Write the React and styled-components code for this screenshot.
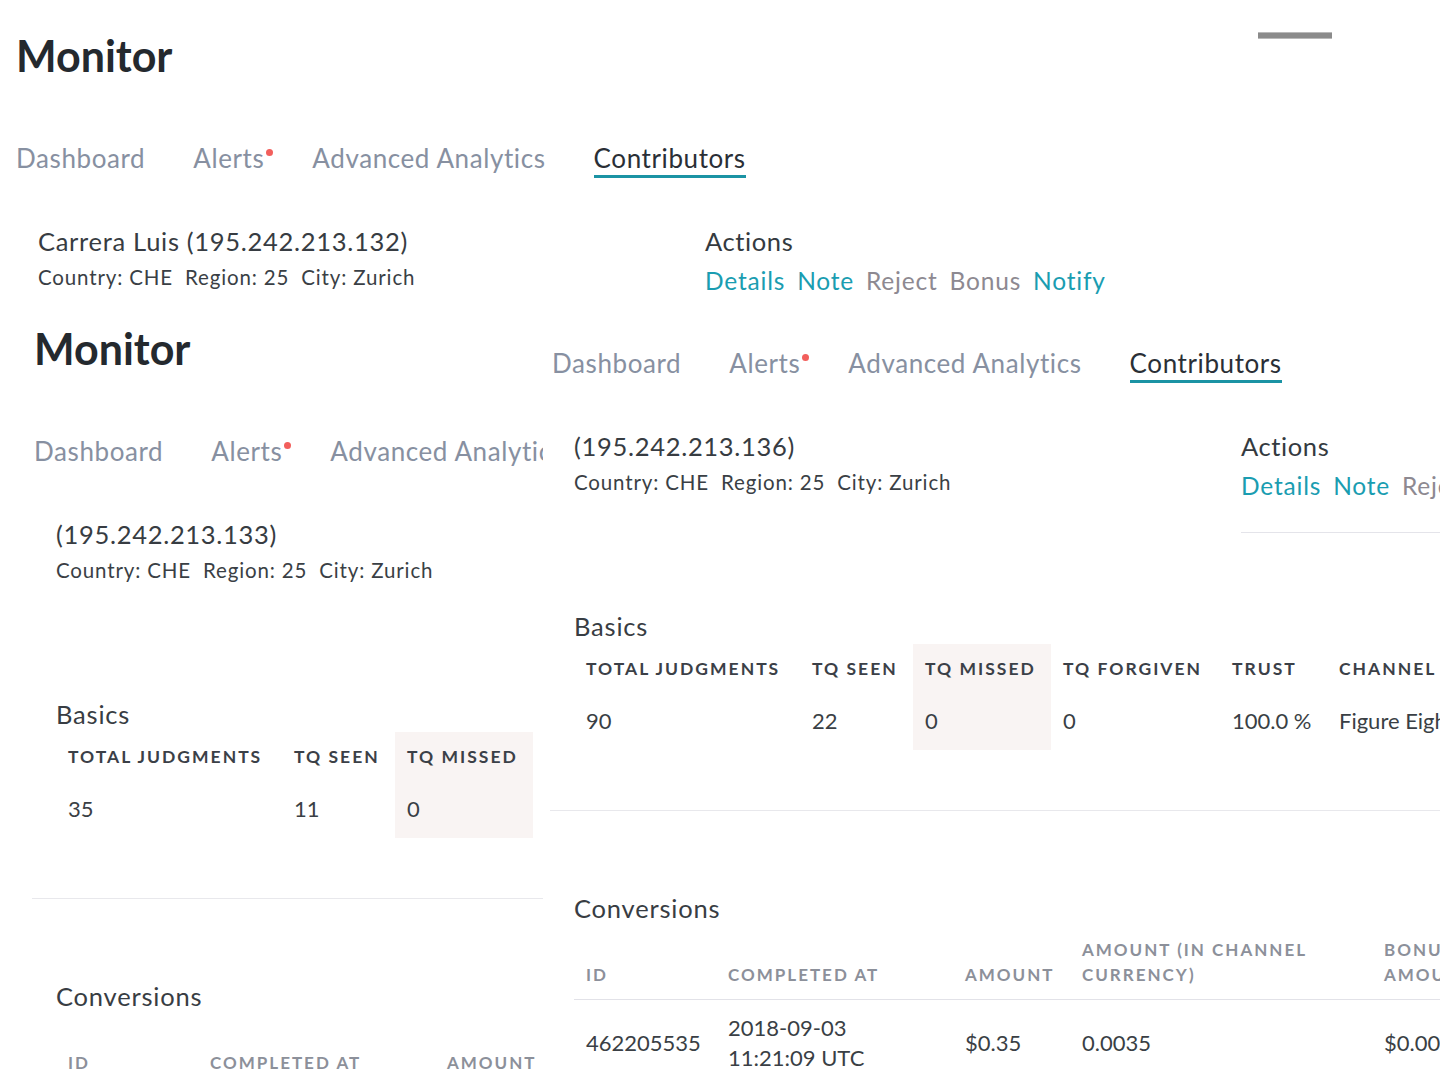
import React from 'react';
import styled, { createGlobalStyle } from 'styled-components';

const GlobalStyle = createGlobalStyle`
  html, body { margin: 0; padding: 0; background: #ffffff; }
  body {
    font-family: Lato, "Open Sans", "Liberation Sans", sans-serif;
    color: #3a3f45;
  }
  * { box-sizing: border-box; }
`;

const Screen = styled.div`
  width: 1440px;
  height: 1080px;
  overflow: hidden;
  display: flex;
  flex-direction: column;
  background: #fff;
`;

const TopPane = styled.div`
  height: 320px;
  flex-shrink: 0;
  overflow: hidden;
`;

const SplitPane = styled.div`
  flex: 1;
  min-height: 0;
  display: grid;
  grid-template-columns: 543px 1fr;
  overflow: hidden;
`;

const Column = styled.div`
  min-width: 0;
  overflow: hidden;
  background: #fff;
`;

const Frame = styled.div`
  width: 1440px;
  padding: ${(p) => p.$top}px 0 0 ${(p) => p.$left}px;
`;

const TitleRow = styled.header`
  display: flex;
  justify-content: space-between;
  align-items: flex-start;
  margin-bottom: 61px;
`;

const Title = styled.h1`
  margin: 0;
  font-size: 43px;
  line-height: 52px;
  font-weight: 700;
  color: #24292e;
`;

const MenuBar = styled.div`
  width: 74px;
  height: 7px;
  margin: 2px 108px 0 0;
  background: #8b8b8b;
  border-top: 1px solid #b9b9b9;
  border-bottom: 1px solid #b9b9b9;
`;

const TabList = styled.nav`
  display: flex;
  gap: 48px;
`;

const Tab = styled.span`
  position: relative;
  font-size: 26px;
  line-height: 1.2;
  letter-spacing: 0.6px;
  padding-bottom: 1px;
  border-bottom: 3px solid ${(p) => (p.$active ? '#1b93a4' : 'transparent')};
  color: ${(p) => (p.$active ? '#2a2f36' : '#8790a1')};
  white-space: nowrap;
`;

const Dot = styled.span`
  position: absolute;
  top: 6px;
  right: -9px;
  width: 7px;
  height: 7px;
  border-radius: 50%;
  background: #f25f5c;
`;

const Head = styled.div`
  display: flex;
  align-items: flex-start;
  margin-top: 48px;
`;

const Info = styled.div`
  width: 689px;
  flex-shrink: 0;
  padding-left: 22px;
`;

const Name = styled.div`
  font-size: 25.5px;
  line-height: 30px;
  letter-spacing: 0.7px;
  color: #373c42;
  white-space: nowrap;
`;

const Meta = styled.div`
  display: flex;
  gap: 12px;
  margin-top: 9px;
  font-size: 20.5px;
  line-height: 24px;
  letter-spacing: 0.85px;
  color: #3a3f45;
  white-space: nowrap;
`;

const Actions = styled.div`
  flex: 1;
  padding-bottom: 32px;
  border-bottom: 1px solid #e4e4ea;
`;

const ActionsTitle = styled.div`
  font-size: 25.5px;
  line-height: 30px;
  letter-spacing: 0.6px;
  color: #343a40;
`;

const LinkRow = styled.div`
  display: flex;
  gap: 12px;
  margin-top: 10px;
  font-size: 24.5px;
  line-height: 29px;
  letter-spacing: 0.8px;
  white-space: nowrap;
`;

const ActionLink = styled.span`
  color: ${(p) => (p.$muted ? '#8d8991' : '#1a9db1')};
`;

const Section = styled.section`
  margin-top: ${(p) => p.$gap}px;
  padding-left: 22px;
`;

const SectionTitle = styled.h2`
  margin: 0;
  font-size: 25.5px;
  line-height: 30px;
  font-weight: 400;
  letter-spacing: 0.8px;
  color: #383d43;
`;

const Table = styled.table`
  margin-top: ${(p) => p.$gap}px;
  border-collapse: collapse;
  table-layout: fixed;
  text-align: left;
`;

const StatHead = styled.th`
  padding: 14px 12px;
  font-size: 17.5px;
  line-height: 21px;
  font-weight: 700;
  letter-spacing: 2px;
  text-transform: uppercase;
  color: #3b4047;
  white-space: nowrap;
  background: ${(p) => (p.$hl ? '#f9f4f3' : 'transparent')};
`;

const StatCell = styled.td`
  padding: 15px 12px 15px;
  font-size: 22px;
  line-height: 26.4px;
  color: #3a3f45;
  white-space: nowrap;
  background: ${(p) => (p.$hl ? '#f9f4f3' : 'transparent')};
`;

const Divider = styled.hr`
  margin: 60px 0 0 -2px;
  border: 0;
  height: 1px;
  background: #e8e8ec;
`;

const ConvHead = styled.th`
  padding: 10px 12px 12px;
  font-size: 17px;
  line-height: 25px;
  font-weight: 700;
  letter-spacing: 2px;
  text-transform: uppercase;
  color: #8c909a;
  vertical-align: bottom;
  border-bottom: 1px solid #e2e2e8;
`;

const ConvCell = styled.td`
  padding: 13px 12px;
  font-size: 22px;
  line-height: 30px;
  color: #3a3f45;
  vertical-align: middle;
`;

const statCols = [226, 113, 138, 169, 107, 220];
const statLabels = ['Total judgments', 'TQ seen', 'TQ missed', 'TQ forgiven', 'Trust', 'Channel'];
const convCols = [142, 237, 117, 302, 140];
const convLabels = ['ID', 'Completed at', 'Amount', 'Amount (in channel currency)', 'Bonus amount'];

const tabs = ['Dashboard', 'Alerts', 'Advanced Analytics', 'Contributors'];
const actions = [
  { label: 'Details' },
  { label: 'Note' },
  { label: 'Reject', muted: true },
  { label: 'Bonus', muted: true },
  { label: 'Notify' },
];

function MonitorPage({ left, top, showTitle, name, ip, stats, conversion }) {
  return (
    <Frame $left={left} $top={top}>
      {showTitle && (
        <TitleRow>
          <Title>Monitor</Title>
          <MenuBar />
        </TitleRow>
      )}
      <TabList>
        {tabs.map((t) => (
          <Tab key={t} $active={t === 'Contributors'}>
            {t}
            {t === 'Alerts' && <Dot />}
          </Tab>
        ))}
      </TabList>
      <Head>
        <Info>
          <Name>{name ? `${name} (${ip})` : `(${ip})`}</Name>
          <Meta>
            <span>Country: CHE</span>
            <span>Region: 25</span>
            <span>City: Zurich</span>
          </Meta>
        </Info>
        <Actions>
          <ActionsTitle>Actions</ActionsTitle>
          <LinkRow>
            {actions.map((a) => (
              <ActionLink key={a.label} $muted={a.muted}>{a.label}</ActionLink>
            ))}
          </LinkRow>
        </Actions>
      </Head>
      <Section $gap={78}>
        <SectionTitle>Basics</SectionTitle>
        <Table $gap={3}>
          <colgroup>
            {statCols.map((w, i) => <col key={i} style={{ width: w }} />)}
          </colgroup>
          <thead>
            <tr>
              {statLabels.map((l, i) => (
                <StatHead key={l} $hl={i === 2}>{l}</StatHead>
              ))}
            </tr>
          </thead>
          <tbody>
            <tr>
              {stats.map((v, i) => (
                <StatCell key={i} $hl={i === 2}>{v}</StatCell>
              ))}
            </tr>
          </tbody>
        </Table>
      </Section>
      <Divider />
      <Section $gap={82}>
        <SectionTitle>Conversions</SectionTitle>
        <Table $gap={4}>
          <colgroup>
            {convCols.map((w, i) => <col key={i} style={{ width: w }} />)}
          </colgroup>
          <thead>
            <tr>
              {convLabels.map((l) => (
                <ConvHead key={l}>{l}</ConvHead>
              ))}
            </tr>
          </thead>
          <tbody>
            <tr>
              <ConvCell>{conversion.id}</ConvCell>
              <ConvCell>
                {conversion.date}
                <br />
                {conversion.time}
              </ConvCell>
              <ConvCell>{conversion.amount}</ConvCell>
              <ConvCell>{conversion.channel}</ConvCell>
              <ConvCell>{conversion.bonus}</ConvCell>
            </tr>
          </tbody>
        </Table>
      </Section>
    </Frame>
  );
}

const conv = {
  id: '462205535',
  date: '2018-09-03',
  time: '11:21:09 UTC',
  amount: '$0.35',
  channel: '0.0035',
  bonus: '$0.00',
};

export default function App() {
  return (
    <>
      <GlobalStyle />
      <Screen>
        <TopPane>
          <MonitorPage
            left={16}
            top={30}
            showTitle
            name="Carrera Luis"
            ip="195.242.213.132"
            stats={['35', '11', '0', '0', '100.0 %', 'Figure Eight']}
            conversion={conv}
          />
        </TopPane>
        <SplitPane>
          <Column>
            <MonitorPage
              left={34}
              top={3}
              showTitle
              ip="195.242.213.133"
              stats={['35', '11', '0', '0', '100.0 %', 'Figure Eight']}
              conversion={conv}
            />
          </Column>
          <Column>
            <MonitorPage
              left={9}
              top={28}
              ip="195.242.213.136"
              stats={['90', '22', '0', '0', '100.0 %', 'Figure Eight']}
              conversion={conv}
            />
          </Column>
        </SplitPane>
      </Screen>
    </>
  );
}
